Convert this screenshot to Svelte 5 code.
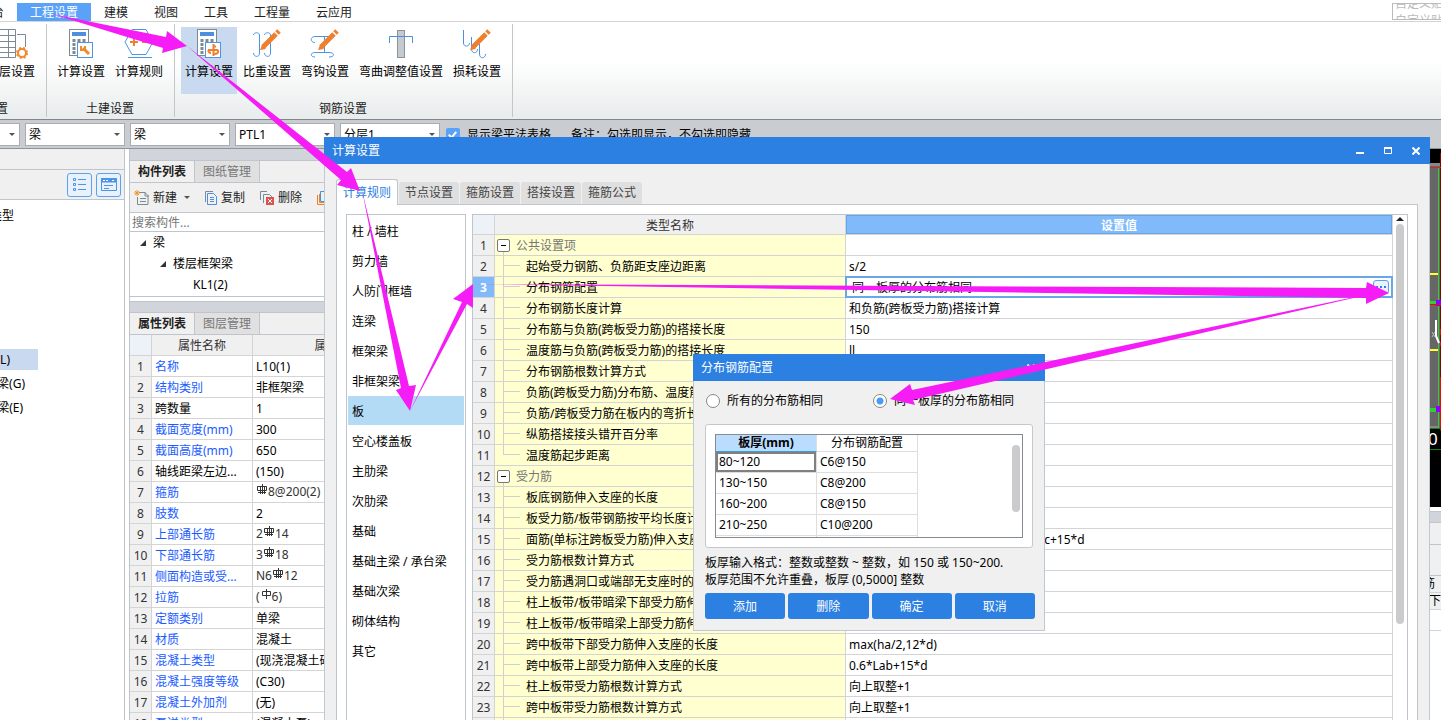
<script lang="ts">
    type Bar = "hrb" | "hpb";
    type Prop = { name: string; value?: string; editable?: boolean; pre?: string; bar?: Bar; post?: string };
    type Setting = { name: string; value?: string; group?: boolean; last?: boolean };

    const menus = ["工程设置", "建模", "视图", "工具", "工程量", "云应用"];
    const combos = ["梁", "梁", "PTL1", "分层1"];

    const properties: Prop[] = [
        { name: "名称", value: "L10(1)", editable: true },
        { name: "结构类别", value: "非框架梁", editable: true },
        { name: "跨数量", value: "1" },
        { name: "截面宽度(mm)", value: "300", editable: true },
        { name: "截面高度(mm)", value: "650", editable: true },
        { name: "轴线距梁左边...", value: "(150)" },
        { name: "箍筋", pre: "", bar: "hrb", post: "8@200(2)", editable: true },
        { name: "肢数", value: "2", editable: true },
        { name: "上部通长筋", pre: "2", bar: "hrb", post: "14", editable: true },
        { name: "下部通长筋", pre: "3", bar: "hrb", post: "18", editable: true },
        { name: "侧面构造或受...", pre: "N6", bar: "hrb", post: "12", editable: true },
        { name: "拉筋", pre: "(", bar: "hpb", post: "6)", editable: true },
        { name: "定额类别", value: "单梁", editable: true },
        { name: "材质", value: "混凝土", editable: true },
        { name: "混凝土类型", value: "(现浇混凝土碎石)", editable: true },
        { name: "混凝土强度等级", value: "(C30)", editable: true },
        { name: "混凝土外加剂", value: "(无)", editable: true },
        { name: "泵送类型", value: "(混凝土泵)", editable: true },
    ];

    const ruleTabs = ["计算规则", "节点设置", "箍筋设置", "搭接设置", "箍筋公式"];

    const elements = [
        "柱 / 墙柱", "剪力墙", "人防门框墙", "连梁", "框架梁", "非框架梁", "板", "空心楼盖板",
        "主肋梁", "次肋梁", "基础", "基础主梁 / 承台梁", "基础次梁", "砌体结构", "其它",
    ];

    const settings: Setting[] = [
        { name: "公共设置项", group: true },
        { name: "起始受力钢筋、负筋距支座边距离", value: "s/2" },
        { name: "分布钢筋配置", value: "同一板厚的分布筋相同" },
        { name: "分布钢筋长度计算", value: "和负筋(跨板受力筋)搭接计算" },
        { name: "分布筋与负筋(跨板受力筋)的搭接长度", value: "150" },
        { name: "温度筋与负筋(跨板受力筋)的搭接长度", value: "ll" },
        { name: "分布钢筋根数计算方式" },
        { name: "负筋(跨板受力筋)分布筋、温度筋" },
        { name: "负筋/跨板受力筋在板内的弯折长度" },
        { name: "纵筋搭接接头错开百分率" },
        { name: "温度筋起步距离", last: true },
        { name: "受力筋", group: true },
        { name: "板底钢筋伸入支座的长度" },
        { name: "板受力筋/板带钢筋按平均长度计算" },
        { name: "面筋(单标注跨板受力筋)伸入支座", value: "能直锚就直锚,否则按公式计算:ha-bhc+15*d" },
        { name: "受力筋根数计算方式" },
        { name: "受力筋遇洞口或端部无支座时的" },
        { name: "柱上板带/板带暗梁下部受力筋伸入" },
        { name: "柱上板带/板带暗梁上部受力筋伸入" },
        { name: "跨中板带下部受力筋伸入支座的长度", value: "max(ha/2,12*d)" },
        { name: "跨中板带上部受力筋伸入支座的长度", value: "0.6*Lab+15*d" },
        { name: "柱上板带受力筋根数计算方式", value: "向上取整+1" },
        { name: "跨中板带受力筋根数计算方式", value: "向上取整+1" },
        { name: "" },
    ];

    const thickness = [
        ["80~120", "C6@150"],
        ["130~150", "C8@200"],
        ["160~200", "C8@150"],
        ["210~250", "C10@200"],
        ["", ""],
    ];

    const arrows = [
        "52,14 166,37 167,31 187,46 162,53 163,48",
        "187,46 347,172 351,168 360,191 337,185 341,180",
        "362,190 409,386 416,385 410,411 396,390 401,388",
        "410,411 462,302 453,299 473,284 473,308 467,304",
        "473,284 1366,288 1367,282 1389,293 1366,304 1366,298",
        "1388,290 912,390 910,384 890,399 915,405 913,400",
    ];

    let currentTab = $state("计算规则");
    let element = $state("板");
    let row = $state(3);
    let mode = $state("same");
    let showTable = $state(true);
</script>

{#snippet calculator()}
    <rect x="0.5" y="0.5" width="19" height="26" fill="#fff" stroke="#7d8a93" />
    <rect x="3" y="3" width="14" height="4" fill="#4b8fdf" />
    <path d="M5 10v15M10 10v15M15 10v15" stroke="#7d8a93" stroke-width="3" stroke-dasharray="3 1" />
    <rect x="8.5" y="13.5" width="15" height="15" fill="#fff" stroke="#4b95e6" />
{/snippet}

{#snippet pencil()}
    <path d="M8 21l2-5 4 4z" fill="#f07f2d" stroke="none" />
    <path d="M11 18L24 5" stroke="#f07f2d" stroke-width="5" />
    <path d="M25 4l2-2" stroke="#f07f2d" stroke-width="5" />
{/snippet}

{#snippet rebar(kind: Bar)}
    <svg class="rebar" width="10" height="10" viewBox="0 0 10 10" fill="none" stroke="#333">
        {#if kind === "hrb"}
            <path d="M5.5 0v10M3.5 2v8M7.5 2v8M.5 2.5h9v4h-9zM1 8.5h8" />
        {:else}
            <path d="M5.5 0v10M1.5 2.5h8v4h-8z" />
        {/if}
    </svg>
{/snippet}

{#snippet caret()}
    <svg width="6" height="3" viewBox="0 0 6 3"><path d="M0 0h6L3 3z" fill="#555" /></svg>
{/snippet}

<div class="app">
    <nav class="menubar">
        <button class="cut">平台</button>
        {#each menus as item}
            <button class:active={item === "工程设置"}>{item}</button>
        {/each}
        <div class="quick">自定义贴图<br />自定义贴图</div>
    </nav>

    <header class="ribbon">
        <section class="clipped">
            <div class="tools">
                <button>
                    <svg width="40" height="30" viewBox="0 0 40 30" fill="none" stroke="#7d8a93">
                        <path d="M.5 .5h24v28H.5zM.5 6.500h24M.5 12.500h24M.5 18.500h24M.5 23.500h24M8.500 .5v28M17.500 .5v28M26 5.500h8.500V18" />
                        <circle cx="31" cy="24" r="5" fill="#f08a2d" stroke="#f08a2d" stroke-width="2" stroke-dasharray="2 2" />
                        <circle cx="31" cy="24" r="3" fill="#fff" stroke="none" />
                    </svg>
                    楼层设置
                </button>
            </div>
            <h2>基本设置</h2>
        </section>
        <section>
            <div class="tools">
                <button>
                    <svg width="24" height="30" viewBox="0 0 24 30">
                        {@render calculator()}
                        <path d="M14 19l6 6" stroke="#f08a2d" stroke-width="3" />
                        <path d="M12 17v4h4v-4" fill="none" stroke="#f08a2d" stroke-width="2" />
                    </svg>
                    计算设置
                </button>
                <button>
                    <svg width="30" height="30" viewBox="0 0 30 30" fill="none" stroke="#4b95e6">
                        <path d="M8 .5h14l7 12.500-7 12.500H8L1 13zM4 28.500h24" />
                        <path d="M6 13h8M10 9v8M18 13h7" stroke="#f07f2d" stroke-width="2" />
                    </svg>
                    计算规则
                </button>
            </div>
            <h2>土建设置</h2>
        </section>
        <section>
            <div class="tools">
                <button class="active">
                    <svg width="24" height="30" viewBox="0 0 24 30">
                        {@render calculator()}
                        <path d="M16.500 15v12M11 21h10M14 24c-3 0-3-3-2-3M19 17.500h-2M21 21c1 3-1 4-4 4" fill="none" stroke="#f07f2d" stroke-width="2" />
                    </svg>
                    计算设置
                </button>
                <button>
                    <svg width="30" height="30" viewBox="0 0 30 30" fill="none" stroke="#4b95e6">
                        <path d="M1.500 6c0-3 6-3 6 0v18c0 5-6 4-6 0M12.500 6c0-3 6-3 6 0v18c0 5-6 4-6 0" />
                        {@render pencil()}
                    </svg>
                    比重设置
                </button>
                <button>
                    <svg width="30" height="30" viewBox="0 0 30 30" fill="none" stroke="#4b95e6">
                        <path d="M5 13.500c-5 0-5-6 0-6h17M19 28c6 0 6-4.500 0-4.500H5c-5 0-5 4.500 0 4.500M14.500 8v15" />
                        {@render pencil()}
                    </svg>
                    弯钩设置
                </button>
                <button>
                    <svg width="26" height="30" viewBox="0 0 26 30" fill="none">
                        <rect x="9.500" y="1.500" width="7" height="27" fill="#c4cacf" stroke="#8a949b" />
                        <path d="M1.500 14V7.500h23V14" stroke="#4b8fdf" />
                    </svg>
                    弯曲调整值设置
                </button>
                <button>
                    <svg width="30" height="30" viewBox="0 0 30 30" fill="none" stroke="#4b8fdf">
                        <path d="M1.500 1v13c0 4 6 4 6 0M9.500 8v12c0 5 6 5 6 0M17.500 15v10c0 5 6 5 6 0" />
                        {@render pencil()}
                    </svg>
                    损耗设置
                </button>
            </div>
            <h2>钢筋设置</h2>
        </section>
    </header>

    <div class="filters">
        <span class="combo short">
            <select aria-label="楼层"><option></option></select>
            {@render caret()}
        </span>
        {#each combos as text, i}
            <span class="combo">
                <select aria-label="构件筛选 {i + 1}"><option>{text}</option></select>
                {@render caret()}
            </span>
        {/each}
        <label class="check"><input type="checkbox" bind:checked={showTable} />显示梁平法表格</label>
        <span class="remark">备注：勾选即显示，不勾选即隐藏</span>
    </div>

    <main>
        <aside class="modules">
            <div class="strip"></div>
            <div class="views">
                <button aria-label="列表视图">
                    <svg width="14" height="14" viewBox="0 0 14 14" fill="none" stroke="#4b95e6">
                        <path d="M.5 .5h2v2h-2zM.5 5.500h2v2h-2zM.5 10.500h2v2h-2zM5 1.500h8M5 6.500h8M5 11.500h8" />
                    </svg>
                </button>
                <button aria-label="窗口视图">
                    <svg width="16" height="14" viewBox="0 0 16 14" fill="none" stroke="#4b95e6">
                        <path d="M.5 .5h15v12H.5z" />
                        <path d="M0 2.500h16" stroke-width="4" />
                        <path d="M2 2.500h6M11 2.500h3" stroke="#fff" stroke-dasharray="2 1" />
                        <path d="M3 7.500h9M3 10.500h5" />
                    </svg>
                </button>
            </div>
            <ul>
                <li>类型</li>
                <li class="selected">梁(L)</li>
                <li>连梁(G)</li>
                <li>圈梁(E)</li>
            </ul>
        </aside>

        <div class="docks">
            <section class="dock">
                <div class="band"></div>
                <div class="tabs"><button class="on">构件列表</button><button>图纸管理</button></div>
                <div class="actions">
                    <button>
                        <svg width="16" height="16" viewBox="0 0 16 16" fill="none" stroke="#7d8a93">
                            <path d="M5 2.500h6l3 3v9H3.500V7M11 2v4h4M6 8.500h6M6 11.500h6" />
                            <path d="M1 1l4 4M5 1L1 5M3 0v6M0 3h6" stroke="#f0942d" />
                        </svg>
                        新建 <span class="drop">{@render caret()}</span>
                    </button>
                    <button>
                        <svg width="14" height="16" viewBox="0 0 14 16" fill="none" stroke="#4b8fdf">
                            <path d="M1.500 12V1.500H9" stroke="#7d8a93" />
                            <path d="M3.500 3.500h6l3 3v8h-9zM6 7.500h4M6 9.500h4M6 11.500h4" />
                        </svg>
                        复制
                    </button>
                    <button>
                        <svg width="16" height="16" viewBox="0 0 16 16" fill="none" stroke="#7d8a93">
                            <path d="M1.500 10V1.500H8M4.500 13V4.500h6l3 3" />
                            <rect x="7" y="7" width="8" height="8" fill="#d9534f" stroke="none" />
                            <path d="M9 9l4 4M13 9l-4 4" stroke="#fff" />
                        </svg>
                        删除
                    </button>
                    <button aria-label="层间复制">
                        <svg width="14" height="16" viewBox="0 0 14 16" fill="none">
                            <path d="M4.500 1.500h9v10h-9z" stroke="#4b8fdf" />
                            <path d="M1.500 5v9.500H12M3.500 4v8.500H12" stroke="#f07f2d" />
                        </svg>
                    </button>
                </div>
                <input class="search" type="text" placeholder="搜索构件..." aria-label="搜索构件" />
                <ul class="tree">
                    <li><svg width="6" height="6"><path d="M6 0v6H0z" fill="#333" /></svg>梁</li>
                    <li class="level2"><svg width="6" height="6"><path d="M6 0v6H0z" fill="#333" /></svg>楼层框架梁</li>
                    <li class="level3">KL1(2)</li>
                </ul>
            </section>
            <section class="dock rest">
                <div class="band"></div>
                <div class="tabs"><button class="on">属性列表</button><button>图层管理</button></div>
                <table class="props">
                    <colgroup><col class="num" /><col class="name" /><col /></colgroup>
                    <thead><tr><th class="corner"></th><th>属性名称</th><th>属性值</th></tr></thead>
                    <tbody>
                        {#each properties as p, i}
                            <tr>
                                <th>{i + 1}</th>
                                <td class:editable={p.editable}>{p.name}</td>
                                {#if p.bar}
                                    <td class="steel">{p.pre}{@render rebar(p.bar)}{p.post}</td>
                                {:else}
                                    <td>{p.value}</td>
                                {/if}
                            </tr>
                        {/each}
                    </tbody>
                </table>
            </section>
        </div>

        <div class="work">
            <div class="canvas">
                <svg width="12" height="358" viewBox="0 0 12 358" fill="none">
                    <rect y="14" width="12" height="266" fill="#666" />
                    <path d="M0 15.500h12M0 278.500h10" stroke="#888" stroke-width="3" />
                    <path d="M9.500 18v262" stroke="#2fd12f" />
                    <path d="M11.500 4v278" stroke="#8b0000" />
                    <path d="M0 18.500h12" stroke="#d22" />
                    <path d="M0 125h9M0 201h9" stroke="#ff3" stroke-width="2" />
                    <path d="M0 154h7M0 261h7" stroke="#2fd12f" stroke-width="4" />
                    <path d="M7 154h5M7 260h5" stroke="#80f" stroke-width="6" />
                    <path d="M0 155.500h12M11.500 180v6M11.500 193v4M11.500 228v50" stroke="#f00" />
                    <path d="M7 171v16l3 7" stroke="#fff" stroke-width="2" />
                    <path d="M3 183l3 5M6 183l-3 5" stroke="#bbb" />
                    <path d="M0 279.500h12M0 300.500h12" stroke="#0a8a0a" />
                    <text x="-1" y="296" fill="#fff" font-size="17">0</text>
                </svg>
            </div>
            <div class="band low"></div>
            <div class="plain"></div>
            <div class="plain tall"></div>
            <div class="line"><span class="inset">筋</span></div>
            <div class="line"><span>下部</span></div>
            <div class="line blank"></div>
        </div>
    </main>

    <div class="window rules" role="dialog" aria-label="计算设置">
        <div class="title">
            计算设置
            <div class="controls">
                <button aria-label="最小化"><svg width="8" height="8"><path d="M0 6h8" stroke="#fff" stroke-width="2" /></svg></button>
                <button aria-label="最大化"><svg width="8" height="8"><path d="M.5 1v5.500h7V1M0 1h8" fill="none" stroke="#fff" /><path d="M0 1h8" stroke="#fff" stroke-width="2" /></svg></button>
                <button aria-label="关闭"><svg width="8" height="8"><path d="M.5 .5l7 7M7.500 .5l-7 7" stroke="#fff" stroke-width="2" /></svg></button>
            </div>
        </div>
        <div class="rule-tabs">
            {#each ruleTabs as t}
                <button class:on={t === currentTab} onclick={() => (currentTab = t)}>{t}</button>
            {/each}
        </div>
        <div class="pane">
            <div class="elements">
                {#each elements as e}
                    <button class:on={e === element} onclick={() => (element = e)}>{e}</button>
                {/each}
            </div>
            <div class="sheet">
                <table>
                    <colgroup><col class="num" /><col class="type" /><col /></colgroup>
                    <thead><tr><th class="corner"></th><th>类型名称</th><th class="current">设置值</th></tr></thead>
                    <tbody>
                        {#each settings as s, i}
                            <tr class:current={row === i + 1} onclick={() => (row = i + 1)}>
                                <th>{i + 1}</th>
                                <td class="type" class:group={s.group} class:last={s.last}>
                                    {#if s.group}
                                        <button class="fold" aria-label="折叠"></button>
                                    {/if}
                                    {s.name}
                                </td>
                                <td class="value">
                                    {s.value ?? ""}
                                    {#if row === i + 1}
                                        <button class="more" aria-label="更多">
                                            <svg width="10" height="2"><path d="M0 1h10" stroke="#2c80e2" stroke-width="2" stroke-dasharray="2" /></svg>
                                        </button>
                                    {/if}
                                </td>
                            </tr>
                        {/each}
                    </tbody>
                </table>
                <div class="scroll">
                    <svg width="8" height="4"><path d="M4 0l4 4H0z" fill="#222" /></svg>
                    <i></i>
                </div>
            </div>
        </div>
    </div>

    <div class="window steel-config" role="dialog" aria-label="分布钢筋配置">
        <div class="title">
            分布钢筋配置
            <div class="controls">
                <button aria-label="关闭"><svg width="8" height="8"><path d="M.5 .5l7 7M7.500 .5l-7 7" stroke="#fff" stroke-width="2" /></svg></button>
            </div>
        </div>
        <div class="content">
            <div class="modes">
                <label><input type="radio" value="all" bind:group={mode} />所有的分布筋相同</label>
                <label><input type="radio" value="same" bind:group={mode} />同一板厚的分布筋相同</label>
            </div>
            <div class="frame">
                <div class="grid">
                    <table>
                        <thead><tr><th class="current">板厚(mm)</th><th>分布钢筋配置</th></tr></thead>
                        <tbody>
                            {#each thickness as [range, bars], i}
                                <tr><td class:focus={i === 0}>{range}</td><td>{bars}</td></tr>
                            {/each}
                        </tbody>
                    </table>
                    <i></i>
                </div>
            </div>
            <p>板厚输入格式：整数或整数 ~ 整数，如 150 或 150~200.<br />板厚范围不允许重叠，板厚 (0,5000] 整数</p>
            <div class="buttons">
                <button>添加</button>
                <button>删除</button>
                <button>确定</button>
                <button>取消</button>
            </div>
        </div>
    </div>

    <svg class="arrows" width="1441" height="720" aria-hidden="true">
        {#each arrows as points}
            <polygon {points} />
        {/each}
    </svg>
</div>

<style>
    :global(body) {
        margin: 0;
    }

    .app {
        position: relative;
        display: flex;
        flex-direction: column;
        height: 100vh;
        overflow: hidden;
        background: #fff;
        color: #000;
        font: 12px/16px "Noto Sans", "Noto Sans CJK SC", sans-serif;
        white-space: nowrap;
    }

    .app *,
    .app *::before,
    .app *::after {
        box-sizing: border-box;
    }

    button,
    input,
    select {
        margin: 0;
        padding: 0;
        border: 0;
        background: none;
        color: inherit;
        font: inherit;
    }

    svg {
        flex: none;
    }

    ul {
        margin: 0;
        padding: 0;
        list-style: none;
    }

    table {
        width: 100%;
        table-layout: fixed;
        border-collapse: separate;
        border-spacing: 0;
    }

    th,
    td {
        height: 21px;
        padding: 2px 3px 0;
        overflow: hidden;
        border: solid #d4d4d4;
        border-width: 0 1px 1px 0;
        font-weight: normal;
        text-align: left;
    }

    th {
        padding: 2px 0 0;
        background: #f0f0f0;
        color: #333;
        text-align: center;
    }

    .corner {
        background: #edf2f8;
    }

    .num {
        width: 22px;
    }

    /* menu */
    .menubar {
        display: flex;
        flex: none;
        height: 22px;
        padding-top: 3px;
        border-bottom: 1px solid #d4d4d4;
        overflow: hidden;
    }

    .menubar button {
        padding: 2px 13px 0;
        color: #222;
    }

    .menubar .cut {
        margin-left: -33px;
    }

    .menubar .active {
        background: #5aa2f8;
        color: #fff;
    }

    .quick {
        display: flex;
        align-items: center;
        width: 49px;
        height: 17px;
        margin-left: auto;
        padding-left: 2px;
        overflow: hidden;
        border: 1px solid #bbb;
        border-right: 0;
        color: #bbb;
        line-height: 17px;
    }

    /* ribbon */
    .ribbon {
        display: flex;
        flex: none;
        height: 98px;
        background: linear-gradient(#fff 40%, #e8ecec);
        border-bottom: 1px solid #858585;
    }

    .ribbon section {
        display: flex;
        flex-direction: column;
        align-items: center;
        margin: 2px 0;
        padding: 3px 7px 0 6px;
        border-right: 1px solid #c4c7ca;
    }

    .ribbon .clipped {
        margin-left: -23px;
    }

    .ribbon .clipped h2 {
        align-self: flex-start;
        margin-left: -23px;
    }

    .tools {
        display: flex;
        gap: 2px;
    }

    .tools button {
        display: flex;
        flex-direction: column;
        align-items: center;
        gap: 5px;
        height: 67px;
        padding: 2px 4px 0;
    }

    .tools .active {
        background: #c9daf0;
    }

    .ribbon h2 {
        margin: 7px 0 0;
        color: #222;
        font-size: 12px;
        font-weight: normal;
    }

    /* filters */
    .filters {
        display: flex;
        flex: none;
        gap: 5px;
        height: 29px;
        padding-top: 3px;
        background: #c9ccd1;
        border-bottom: 1px solid #8d949b;
        overflow: hidden;
    }

    .combo {
        display: flex;
        align-items: center;
        width: 100px;
        height: 23px;
        padding-right: 4px;
        background: #fff;
        border: 1px solid #a9acb0;
    }

    .combo.short {
        width: 21px;
        margin-left: -1px;
    }

    .combo select {
        flex: 1;
        min-width: 0;
        padding-left: 3px;
        appearance: none;
    }

    .check {
        display: flex;
        align-items: center;
        gap: 7px;
        height: 23px;
        padding-left: 1px;
    }

    .check input {
        width: 14px;
        height: 14px;
        border-radius: 2px;
        appearance: none;
        background: #fff;
    }

    .check input:checked {
        background: #5aa2f8;
    }

    .check input::before {
        content: "";
        display: block;
        width: 5px;
        height: 8px;
        margin: 2px 0 0 4px;
        border: solid #fff;
        border-width: 0 2px 2px 0;
        transform: rotate(40deg);
    }

    .remark {
        margin-left: 15px;
        line-height: 24px;
    }

    main {
        display: flex;
        flex: 1;
        min-height: 0;
    }

    /* module tree */
    .modules {
        width: 125px;
        border-right: 1px solid #c0c4cc;
        overflow: hidden;
    }

    .strip {
        height: 21px;
        background: #f0f0f0;
        border-bottom: 1px solid #c0c4cc;
    }

    .views {
        display: flex;
        justify-content: flex-end;
        gap: 4px;
        height: 30px;
        padding: 3px;
        background: #f0f0f0;
        border-bottom: 1px solid #c0c4cc;
    }

    .views button {
        display: flex;
        align-items: center;
        justify-content: center;
        width: 25px;
        height: 24px;
        border: 1px solid #5aa2f0;
        border-radius: 3px;
        background: #e9f2fc;
    }

    .modules li {
        display: flex;
        justify-content: flex-end;
        width: 38px;
        height: 21px;
        margin-bottom: 3px;
        padding-right: 13px;
        line-height: 21px;
    }

    .modules li:first-child {
        margin: 5px 0 123px;
        padding-right: 24px;
    }

    .modules .selected {
        padding-right: 28px;
        background: #c9daf0;
    }

    .modules li:last-child {
        padding-right: 15px;
    }

    /* docks */
    .docks {
        display: flex;
        flex-direction: column;
        width: 284px;
        margin-left: 4px;
        border-left: 1px solid #c0c4cc;
    }

    .dock {
        border-bottom: 1px solid #c0c4cc;
    }

    .rest {
        margin-top: 4px;
        border-top: 1px solid #c0c4cc;
    }

    .band {
        height: 12px;
        background: #d1d4da;
        border-bottom: 1px solid #c0c4cc;
    }

    .rest .band {
        height: 11px;
    }

    .tabs {
        display: flex;
        height: 22px;
        background: #f0f0f0;
        border-bottom: 1px solid #c0c4cc;
    }

    .tabs button {
        width: 65px;
        border-right: 1px solid #c0c4cc;
        background: #e0e0e0;
        color: #777;
    }

    .tabs .on {
        background: #f0f0f0;
        color: #222;
        font-weight: bold;
    }

    .actions {
        display: flex;
        gap: 14px;
        height: 30px;
        padding-left: 4px;
        background: #f0f0f0;
        border-bottom: 1px solid #c0c4cc;
        color: #222;
    }

    .actions button {
        display: flex;
        align-items: center;
        gap: 3px;
    }

    .drop {
        display: flex;
        margin-left: 4px;
    }

    .search {
        display: block;
        width: 100%;
        height: 19px;
        padding-left: 2px;
        border-bottom: 1px solid #c0c4cc;
    }

    .search::placeholder {
        color: #777;
    }

    .tree {
        height: 64px;
    }

    .tree li {
        display: flex;
        align-items: center;
        gap: 7px;
        height: 21px;
        padding-left: 10px;
    }

    .tree .level2 {
        padding-left: 30px;
    }

    .tree .level3 {
        padding-left: 63px;
    }

    .props .name {
        width: 101px;
    }

    .editable {
        color: #1a5cff;
    }

    .steel {
        padding-top: 0;
        color: #333;
    }

    .rebar {
        margin: 0 1px;
        vertical-align: 2px;
    }

    /* drawing area */
    .work {
        display: flex;
        flex: 1;
        flex-direction: column;
    }

    .canvas {
        display: flex;
        justify-content: flex-end;
        height: 358px;
        margin-bottom: 4px;
        background: #000;
    }

    .band.low {
        border-top: 1px solid #c0c4cc;
    }

    .plain,
    .line {
        height: 22px;
        background: #f0f0f0;
        border-bottom: 1px solid #c0c4cc;
    }

    .plain.tall {
        height: 31px;
    }

    .line {
        height: 17px;
        border-color: #d4d4d4;
    }

    .line.blank {
        height: 21px;
        background: #fff;
    }

    .line span {
        display: block;
        width: 12px;
        margin-left: auto;
        overflow: hidden;
    }

    .line .inset {
        margin-right: 6px;
    }

    /* windows */
    .window {
        position: absolute;
        display: flex;
        flex-direction: column;
        background: #f0f0f0;
        border: 1px solid #c0c8d4;
        border-top: 0;
        isolation: isolate;
    }

    .rules {
        top: 137px;
        right: 11px;
        bottom: 0;
        left: 324px;
        border-bottom: 0;
    }

    .title {
        display: flex;
        align-items: center;
        flex: none;
        height: 27px;
        margin: 0 -1px;
        padding: 0 10px 0 8px;
        background: #2c80e2;
        color: #fff;
    }

    .controls {
        display: flex;
        gap: 20px;
        margin-left: auto;
    }

    .controls button {
        display: flex;
    }

    .rule-tabs {
        display: flex;
        align-items: flex-end;
        gap: 1px;
        height: 40px;
        margin-left: 11px;
    }

    .rule-tabs button {
        width: 60px;
        height: 22px;
        border-radius: 3px 3px 0 0;
        background: #dfdfdf;
        color: #444;
    }

    .rule-tabs .on {
        z-index: 1;
        width: 62px;
        height: 26px;
        margin-bottom: -1px;
        border: 1px solid #c0c4cc;
        border-bottom: 0;
        background: #fff;
        color: #2c80e2;
    }

    .pane {
        display: flex;
        flex: 1;
        gap: 6px;
        min-height: 0;
        margin: 0 11px;
        padding: 9px 9px 0;
        border: 1px solid #c0c4cc;
        border-bottom: 0;
        background: #fff;
    }

    .elements {
        display: flex;
        flex: none;
        flex-direction: column;
        gap: 1px;
        width: 120px;
        padding: 1px;
        border: 1px solid #c0c4cc;
        border-bottom: 0;
    }

    .elements button {
        flex: none;
        height: 29px;
        padding: 2px 0 0 4px;
        text-align: left;
    }

    .elements .on {
        background: #b4dbf5;
    }

    .sheet {
        display: flex;
        flex: 1;
        min-width: 0;
        overflow: hidden;
        border: 1px solid #c0c4cc;
        border-bottom: 0;
    }

    .sheet table {
        flex: 1;
        align-self: flex-start;
    }

    .sheet col.type {
        width: 351px;
    }

    .sheet thead th {
        height: 20px;
    }

    .sheet thead .current {
        background: #80bafa;
        box-shadow: inset 0 0 0 1px #62a6ec;
        color: #fff;
        font-weight: bold;
    }

    .sheet td.type {
        position: relative;
        padding-left: 31px;
        background: #ffffcf;
    }

    .sheet td.type::before {
        content: "";
        position: absolute;
        top: 0;
        left: 8px;
        width: 1px;
        height: 21px;
        background: #cfcfcf;
    }

    .sheet td.type::after {
        content: "";
        position: absolute;
        top: 9px;
        left: 8px;
        width: 17px;
        height: 1px;
        background: #cfcfcf;
    }

    .sheet td.last::before {
        height: 10px;
    }

    .sheet td.group {
        padding-left: 2px;
        color: #777;
    }

    .sheet td.group::before {
        top: 16px;
        height: 5px;
    }

    .sheet td.group::after {
        display: none;
    }

    .fold {
        position: relative;
        width: 13px;
        height: 13px;
        margin-right: 3px;
        border: 1px solid #777;
        border-radius: 2px;
        background: #fff;
        vertical-align: -1px;
    }

    .fold::after {
        content: "";
        position: absolute;
        top: 5px;
        left: 3px;
        width: 5px;
        height: 1px;
        background: #000;
    }

    .sheet tr.current th {
        background: #80bafa;
        color: #fff;
        font-weight: bold;
    }

    .sheet tr.current .value {
        position: relative;
        padding-left: 6px;
        overflow: visible;
    }

    .sheet tr.current .value::before {
        content: "";
        position: absolute;
        inset: -1px;
        border: 2px solid #68a8e8;
    }

    .more {
        position: absolute;
        top: 3px;
        right: 3px;
        display: flex;
        align-items: center;
        justify-content: center;
        width: 16px;
        height: 14px;
        border: 1px solid #5aa2e8;
        border-radius: 3px;
        background: #e9f2fc;
    }

    .scroll {
        display: flex;
        flex-direction: column;
        align-items: center;
        width: 14px;
        padding-top: 2px;
    }

    .scroll i,
    .grid i {
        width: 8px;
        height: 400px;
        margin-top: 3px;
        border-radius: 4px;
        background: #cbcbcb;
    }

    .steel-config {
        top: 354px;
        left: 693px;
        width: 352px;
    }

    .content {
        padding: 12px 9px 11px 11px;
    }

    .modes {
        display: flex;
        gap: 49px;
        height: 15px;
        margin-bottom: 16px;
    }

    .modes label {
        display: flex;
        align-items: center;
        gap: 7px;
    }

    .modes input {
        width: 14px;
        height: 14px;
        margin-left: 1px;
        border: 1px solid #888;
        border-radius: 50%;
        background: #fff;
        appearance: none;
    }

    .modes input:checked {
        background: radial-gradient(#4a9bf5 3px, #fff 4px);
    }

    .frame {
        height: 124px;
        margin-right: 2px;
        padding: 9px;
        border: 1px solid #c4c8cd;
        border-radius: 3px;
        background: #fff;
    }

    .grid {
        display: flex;
        align-items: flex-start;
        justify-content: space-between;
        height: 104px;
        padding-right: 2px;
        overflow: hidden;
        border: 1px solid #858b92;
    }

    .grid table {
        width: 202px;
    }

    .grid th,
    .grid td {
        padding-top: 0;
        border-color: #dedede;
    }

    .grid th {
        height: 17px;
        background: #fff;
        color: #000;
    }

    .grid .current {
        border-bottom: 1px solid #38a0cc;
        background: #b9dcff;
        font-weight: bold;
    }

    .grid .focus {
        box-shadow: inset 0 0 0 2px #808080;
    }

    .grid i {
        height: 67px;
        margin-top: 10px;
    }

    .content p {
        margin: 6px 0 5px;
        line-height: 17px;
    }

    .buttons {
        display: flex;
        gap: 3px;
    }

    .buttons button {
        flex: 1;
        height: 26px;
        padding-top: 2px;
        border-radius: 3px;
        background: #2c80e2;
        color: #fff;
    }

    .arrows {
        position: absolute;
        top: 0;
        left: 0;
        pointer-events: none;
    }

    .arrows polygon {
        fill: #f51cf5;
    }
</style>
